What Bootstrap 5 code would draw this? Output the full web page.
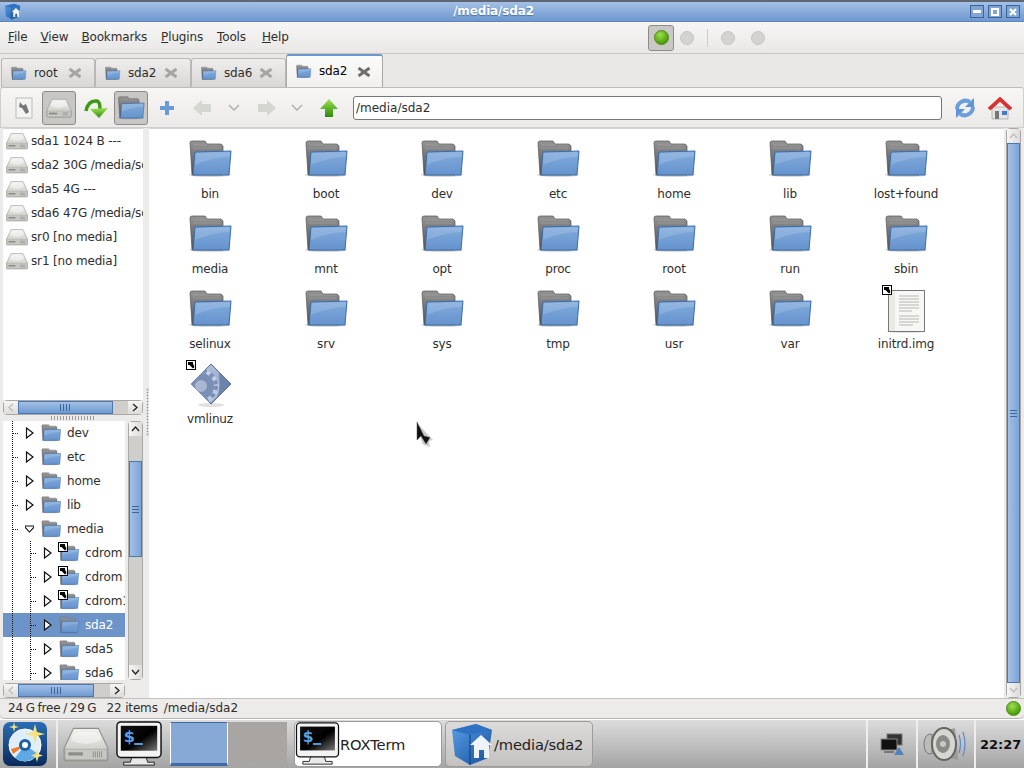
<!DOCTYPE html>
<html lang="en">
<head>
<meta charset="utf-8">
<title>/media/sda2</title>
<link href="https://cdn.jsdelivr.net/npm/bootstrap@5.3.0/dist/css/bootstrap.min.css" rel="stylesheet">
<style>
html,body{height:100%;}
body{width:1024px;height:768px;overflow:hidden;font-family:"DejaVu Sans",sans-serif;font-size:12px;letter-spacing:-.15px;color:#2e2e2e;background:#ecebe9;line-height:17px;}
.svgdefs{position:absolute;width:0;height:0;}
.win-title{height:22px;background:linear-gradient(#a3c0e5,#6e98cf);border-top:2px solid #5f6672;border-bottom:1px solid #5f86b8;padding:0 4px;color:#fff;font-weight:700;text-shadow:0 1px 1px #4d6f9e;}
.win-title .ttl{flex:1;text-align:center;font-size:12px;}
.wbtn{width:14px;height:13px;border:1px solid #3c6296;background:#7fa4d6;margin-left:4px;}
.menubar{height:32px;background:linear-gradient(#f7f6f5,#e9e8e6);border-bottom:1px solid #c8c7c5;padding:0 0 0 8px;}
.menu-i{margin-right:14px;color:#2e2e2e;}
.menu-tight{margin-right:13px;}
.menu-wide{margin-right:16px;}
.ledgroup{margin-right:259px;margin-left:auto;}
.led-btn{width:26px;height:26px;border:1px solid #8d8b88;border-radius:3px;background:#c9c8c5;margin-right:6px;}
.led{width:14px;height:14px;border-radius:50%;background:#d3d3d0;border:1px solid #c5c5c2;display:block;}
.led-on{width:15px;height:15px;background:radial-gradient(circle at 40% 30%,#9be04f,#4e9e0c 70%);border:1px solid #4b8a12;}
.led-sep{width:1px;height:18px;background:#cfcecb;margin:0 13px;}
.tabrow{height:33px;padding-left:1px;background:#e9e8e6;border:0;flex-wrap:nowrap;}
.tabrow .nav-link{height:29px;width:94px;margin:4px 0 0;padding:0 12px 0 8px;border:1px solid #b9b8b6;border-bottom:0;border-radius:3px 3px 0 0;background:linear-gradient(#efeeec,#d8d7d5);color:#2e2e2e;font-size:12px;display:flex;align-items:center;gap:7px;}
.tabrow .nav-item:nth-child(2) .nav-link{width:96px;}
.tabrow .nav-item:nth-child(3) .nav-link{width:95px;}
.tabrow .nav-link.active{height:33px;width:97px;margin-top:0;background:linear-gradient(#fbfbfa,#f1f0ef);border-color:#a9a8a6;border-top:2px solid #6d98cd;padding-right:11px;}
.tabicon{width:17px;height:17px;flex:none;}
.tabx{width:14px;height:10px;margin-left:auto;flex:none;color:#a5a5a2;}
.active .tabx{color:#6f6f6d;}
.tbar{height:41px;background:linear-gradient(#f7f6f5,#eceae8);border:1px solid #cfcecb;border-top:1px solid #bdbcba;border-radius:3px 3px 0 0;padding-left:13px;}
.tbar>svg{flex:none;}
.tb-press{width:34px;height:34px;border:1px solid #8d8b88;border-radius:3px;background:#c8c7c4;flex:none;}
.tbturn{margin:0 4px 0 8px;}
.tbplus{margin-left:11px;}
.tbback{margin-left:17px;}
.tbchev{margin-left:16px;}
.tbfwd{margin-left:17px;}
.tbchev2{margin-left:14px;}
.tbup{margin-left:16px;}
.path-inp{height:24px;width:589px;margin-left:14px;flex:none;border:1px solid #77767a;border-radius:3px;font-size:12px;padding:0 2px;color:#2e2e2e;box-shadow:none;background:#fff;letter-spacing:0;}
.tbref{margin-left:11px;}
.tbhome{margin-left:10px;}
.panes{height:570px;}
.side{width:146px;padding-left:3px;}
.devlist{height:272px;background:#fff;overflow:hidden;width:140px;border-top:1px solid #d5d4d2;}
.devrow{height:24px;white-space:nowrap;gap:2px;padding-left:2px;}
.hscroll{height:15px;border:1px solid #a9a8a6;border-radius:4px;background:#cfcecb;flex:none;}
.hs-top{width:140px;}
.hs-low{width:122px;margin-top:3px;}
.sb-end{width:14px;flex:none;background:linear-gradient(#f6f5f4,#dddcda);color:#333;}
.sb-thumb{background:linear-gradient(#a3c0e6,#6f9bd2);border:1px solid #4b78b3;}
.th-top{width:95px;}
.th-low{width:76px;}
.th-v{height:96px;}
.grip{width:11px;height:7px;display:block;background:repeating-linear-gradient(90deg,#3f669a 0 1px,transparent 1px 3px);}
.grip-v{width:7px;height:8px;display:block;background:repeating-linear-gradient(0deg,#3f669a 0 1px,transparent 1px 3px);}
.hgrab{height:6px;width:140px;flex:none;padding:1px 0 0 47px;}
.dots-h{display:block;width:46px;height:4px;background:radial-gradient(circle,#9a9997 .8px,transparent 1.100px) 0 0/3px 2px;}
.treewrap{height:259px;width:140px;gap:3px;flex:none;}
.tree{width:122px;background:#fff;overflow:hidden;height:259px;}
.trow{height:24px;white-space:nowrap;}
.trow.sel{background:#6d94c8;color:#fff;}
.con{width:18px;height:24px;flex:none;margin-left:9px;background:repeating-linear-gradient(#111 0 1px,transparent 1px 2px) 0 0/1px 100% no-repeat;}
.con+.con{margin-left:0;}
.con-last{background:repeating-linear-gradient(#111 0 1px,transparent 1px 2px) 0 0/1px 100% no-repeat,repeating-linear-gradient(90deg,#111 0 1px,transparent 1px 2px) 1px 12px/5px 1px no-repeat;}
.tri{width:9px;height:12px;flex:none;margin-left:-5px;margin-right:6px;}
.ticon{width:22px;height:22px;flex:none;margin-right:5px;}
.badge-box{position:relative;display:block;flex:none;}
.badge-box .ticon{margin-right:0;display:block;}
.lnk{position:absolute;left:0;top:0;width:10px;height:10px;}
.filegrid{flex:1;background:#fff;display:grid;grid-template-columns:repeat(7,116px);grid-auto-rows:75px;align-content:start;padding:1px 0 0 3px;border-top:1px solid #d5d4d2;}
.fitem{padding-top:5px;text-align:center;}
.bigicon{width:48px;height:48px;display:block;margin:0 auto;}
.fname{margin-top:2px;height:18px;line-height:18px;color:#2e2e2e;}
.vscroll{width:15px;flex:none;border:1px solid #a9a8a6;border-radius:4px;background:#cfcecb;}
.vend{height:14px;flex:none;background:linear-gradient(90deg,#f6f5f4,#dddcda);}
.vgap{height:25px;flex:none;}
.vthumb{background:linear-gradient(90deg,#a3c0e6,#7ca5d8);border:1px solid #4b78b3;}
.mainscroll{margin:0 3px 0 2px;}
.gutter{width:3px;padding-top:260px;}
.dots-v{display:block;width:3px;height:48px;background:radial-gradient(circle,#9a9997 .8px,transparent 1.100px) 0 0/3px 3px;}
.statusbar{height:21px;border-top:1px solid #c3c2c0;border-bottom:1px solid #b5b4b2;border-radius:0 0 5px 5px;padding:0 3px 0 8px;background:#ecebe9;gap:6px;}
.st-free{word-spacing:-1px;margin-right:4px;}
.st-path{letter-spacing:0;}
.taskbar{height:49px;background:linear-gradient(#dcdcdc,#a4a4a4);border-top:1px solid #fff;flex:none;}
.startcell{width:58px;height:100%;border-right:2px solid #eee;padding-left:2px;flex:none;}
.tk-drive{margin-left:3px;flex:none;}
.tk-term{margin-left:4px;flex:none;}
.pager{width:117px;height:44px;margin-left:7px;flex:none;}
.desk1{width:58px;background:#86a9d6;border:1px solid #fff;border-top:1px solid #3f6aa5;border-bottom:3px solid #3f6aa5;}
.desk2{flex:1;background:#a8a5a2;}
.taskbtn{height:46px;width:148px;flex:none;border:1px solid #9d9c9a;border-radius:5px;font-size:14.7px;color:#222;white-space:nowrap;}
.taskbtn.on{background:#fff;margin-left:7px;}
.taskbtn.off{background:linear-gradient(#dddbd9,#c4c2c0);margin-left:3px;}
.tray{height:100%;border-left:2px solid #eee;flex:none;}
.tray-net{width:50px;padding-left:12px;}
.tray-snd{width:58px;padding-left:5px;}
.tray-clk{width:50px;padding-left:4px;}
.clock{font-weight:700;font-size:13px;color:#111;letter-spacing:0;}
.ptr{position:absolute;left:416px;top:421px;width:18px;height:26px;}
</style>
</head>
<body class="d-flex flex-column">
<svg class="svgdefs" xmlns="http://www.w3.org/2000/svg">
<defs>
<linearGradient id="gBack" x1="0" y1="0" x2="0" y2="1"><stop offset="0" stop-color="#949494"/><stop offset="1" stop-color="#4f4f4f"/></linearGradient>
<linearGradient id="gBlue" x1="0" y1="0" x2="0" y2="1"><stop offset="0" stop-color="#83acdd"/><stop offset="1" stop-color="#6593cd"/></linearGradient>
<linearGradient id="gDrive" x1="0" y1="0" x2="0" y2="1"><stop offset="0" stop-color="#f2f2f0"/><stop offset="1" stop-color="#bdbdb9"/></linearGradient>
<linearGradient id="gScreen" x1="0" y1="0" x2="1" y2="1"><stop offset="0" stop-color="#111"/><stop offset=".55" stop-color="#000"/><stop offset="1" stop-color="#777"/></linearGradient>
<linearGradient id="gCube" x1="0" y1="0" x2="1" y2="1"><stop offset="0" stop-color="#5aa0e6"/><stop offset="1" stop-color="#134f9c"/></linearGradient>
<linearGradient id="gGreen" x1="0" y1="0" x2="0" y2="1"><stop offset="0" stop-color="#9be04f"/><stop offset="1" stop-color="#2f8a10"/></linearGradient>
<linearGradient id="gDia" x1="0" y1="0" x2="1" y2="1"><stop offset="0" stop-color="#c0cce2"/><stop offset="1" stop-color="#7d95bd"/></linearGradient>
<linearGradient id="gStart" x1="0" y1="0" x2="0" y2="1"><stop offset="0" stop-color="#2a6db4"/><stop offset="1" stop-color="#0a2a5a"/></linearGradient>
<clipPath id="clipDia"><path d="M25 4L45 24L25 44L5 24Z"/></clipPath>
<symbol id="folder" viewBox="0 0 48 48">
<ellipse cx="24" cy="40" rx="21" ry="2" fill="#000" opacity=".15"/>
<path d="M4 8Q4 6 6 6H19L21 9H35L37 11V40H6Z" fill="url(#gBack)" stroke="#555" stroke-width=".7"/>
<path d="M7 10H34M7 13H34" stroke="#ccc" stroke-width=".5" opacity=".5"/>
<path d="M9 17L45 16L43 40H7Z" fill="url(#gBlue)" stroke="#3a6cab" stroke-width="1"/>
<path d="M9.500 18L44 17L43.500 22Q28 22 9 30Z" fill="#fff" opacity=".14"/>
</symbol>
<symbol id="drive" viewBox="0 0 48 48">
<path d="M12 9H36L45 28V38Q45 40 43 40H5Q3 40 3 38V28Z" fill="url(#gDrive)" stroke="#8d8d89"/>
<path d="M4 29H44V38Q44 39 43 39H5Q4 39 4 38Z" fill="#c7c7c3" stroke="#9d9d99" stroke-width=".6"/>
<rect x="7" y="32" width="14" height="3" fill="#8b8b87"/><path d="M31 31v6M33 31v6M35 31v6M37 31v6M39 31v6" stroke="#888" stroke-width=".8"/>
<ellipse cx="24" cy="18" rx="14" ry="6" fill="#fff" opacity=".4"/>
</symbol>
<symbol id="term" viewBox="0 0 48 48">
<path d="M17 36H31L33 43H40V46H8V43H15Z" fill="#e9e9e9" stroke="#222"/>
<rect x="1" y="1" width="46" height="37" rx="4" fill="#f3f3f3" stroke="#111" stroke-width="1.500"/>
<rect x="5" y="5" width="38" height="26" fill="url(#gScreen)"/>
<text x="8" y="22" font-family="DejaVu Sans" font-size="17" font-weight="700" fill="#59a0ea">$</text>
<rect x="19" y="23" width="9" height="2" fill="#59a0ea"/>
</symbol>
<symbol id="cube" viewBox="0 0 44 44">
<path d="M2 8L26 2L42 8L38 36L20 43L5 34Z" fill="url(#gCube)"/>
<path d="M2 8L26 2L42 8L20 13Z" fill="#2f72c4"/>
<path d="M20 13L20 43" stroke="#0b3c7c" stroke-width="1"/>
<path d="M31 13L42 23H39V36H34V28H29V36H24V23H20Z" fill="#fff" opacity=".92"/>
</symbol>
<symbol id="start" viewBox="0 0 46 46">
<rect x="1" y="1" width="44" height="44" rx="7" fill="url(#gStart)"/>
<circle cx="23" cy="24" r="16" fill="#dfeefb" stroke="#fff" stroke-width="1"/>
<path d="M23 24L13 37A16 16 0 0 0 36 33Z" fill="#5ea9e5"/>
<path d="M23 24L9 28L11 33Z" fill="#ef7d2d"/>
<circle cx="23" cy="24" r="6" fill="#1f5fa8"/><circle cx="23" cy="24" r="3" fill="#fff"/>
<path d="M33 3L35 11L43 13L35 15L33 23L31 15L23 13L31 11Z" fill="#f5e27a"/>
<path d="M12 1L13 5L17 6L13 7L12 11L11 7L7 6L11 5Z" fill="#f5e27a"/>
<path d="M35 28L36.500 33L41 34.500L36.500 36L35 41L33.500 36L29 34.500L33.500 33Z" fill="#f5e27a"/>
</symbol>
<symbol id="xmark" viewBox="0 0 14 10"><path d="M1.500 1L12.500 9M12.500 1L1.500 9" stroke="currentColor" stroke-width="3"/></symbol>
<symbol id="triR" viewBox="0 0 9 12"><path d="M1.500 1L8 6L1.500 11Z" fill="#fff" stroke="#111" stroke-width="1.200"/></symbol>
<symbol id="lnkbadge" viewBox="0 0 10 10"><rect x=".5" y=".5" width="9" height="9" fill="#fff" stroke="#000"/><path d="M2 2H7V3.500L8.500 7L7 8.500L3.500 5H2Z" fill="#000"/></symbol>
</defs>
</svg>

<header class="win-title d-flex align-items-center">
<svg width="17" height="17" class="flex-shrink-0"><use href="#cube"/></svg>
<div class="ttl">/media/sda2</div>
<span class="wbtn d-flex align-items-end justify-content-center"><svg width="8" height="3" class="mb-1"><rect width="8" height="3" fill="#fff"/></svg></span>
<span class="wbtn d-flex align-items-center justify-content-center"><svg width="8" height="8"><rect x="1" y="1" width="6" height="6" fill="none" stroke="#fff" stroke-width="2"/></svg></span>
<span class="wbtn d-flex align-items-center justify-content-center"><svg width="8" height="8"><path d="M1 1L7 7M7 1L1 7" stroke="#fff" stroke-width="2.200"/></svg></span>
</header>

<nav class="menubar d-flex align-items-center">
<span class="menu-i menu-tight"><u>F</u>ile</span><span class="menu-i menu-tight"><u>V</u>iew</span><span class="menu-i"><u>B</u>ookmarks</span><span class="menu-i"><u>P</u>lugins</span><span class="menu-i menu-wide"><u>T</u>ools</span><span class="menu-i"><u>H</u>elp</span>
<span class="ledgroup d-flex align-items-center">
<span class="led-btn d-flex align-items-center justify-content-center"><span class="led led-on"></span></span>
<span class="led"></span><span class="led-sep"></span><span class="led"></span><span class="led ms-3"></span>
</span>
</nav>

<ul class="nav nav-tabs tabrow">
<li class="nav-item"><a class="nav-link" href="#"><svg class="tabicon"><use href="#folder"/></svg>root<svg class="tabx"><use href="#xmark"/></svg></a></li>
<li class="nav-item"><a class="nav-link" href="#"><svg class="tabicon"><use href="#folder"/></svg>sda2<svg class="tabx"><use href="#xmark"/></svg></a></li>
<li class="nav-item"><a class="nav-link" href="#"><svg class="tabicon"><use href="#folder"/></svg>sda6<svg class="tabx"><use href="#xmark"/></svg></a></li>
<li class="nav-item"><a class="nav-link active" href="#"><svg class="tabicon"><use href="#folder"/></svg>sda2<svg class="tabx"><use href="#xmark"/></svg></a></li>
</ul>

<div class="tbar d-flex align-items-center">
<svg width="20" height="24"><rect x="2" y="2" width="16" height="20" fill="#f4f4f2" stroke="#bbb"/><path d="M6 6L9 9.500L12 8L15 16L12 18L8 12L5 11Z" fill="#777"/></svg>
<span class="tb-press d-flex align-items-center justify-content-center ms-2"><svg width="28" height="28"><use href="#drive"/></svg></span>
<svg width="26" height="26" class="tbturn" viewBox="0 0 26 26"><path d="M2 16Q4 5 13 6Q16 7 16 14" fill="none" stroke="#3d9a12" stroke-width="3.500"/><path d="M6 14L24 13L15 23Z" fill="url(#gGreen)"/></svg>
<span class="tb-press d-flex align-items-center justify-content-center"><svg width="30" height="30"><use href="#folder"/></svg></span>
<svg width="16" height="16" class="tbplus" viewBox="0 0 16 16"><path d="M6 1H10V6H15V10H10V15H6V10H1V6H6Z" fill="#6a9bd6"/></svg>
<svg width="20" height="18" viewBox="0 0 20 18" class="tbback"><path d="M1 9L10 1V5H19V13H10V17Z" fill="#d5d5d2"/></svg>
<svg width="12" height="8" viewBox="0 0 12 8" class="tbchev"><path d="M1 1L6 6L11 1" fill="none" stroke="#aaa" stroke-width="1.300"/></svg>
<svg width="20" height="18" viewBox="0 0 20 18" class="tbfwd"><path d="M19 9L10 1V5H1V13H10V17Z" fill="#d5d5d2"/></svg>
<svg width="12" height="8" viewBox="0 0 12 8" class="tbchev2"><path d="M1 1L6 6L11 1" fill="none" stroke="#aaa" stroke-width="1.300"/></svg>
<svg width="20" height="20" viewBox="0 0 20 20" class="tbup"><path d="M10 1L19 11H14V19H6V11H1Z" fill="url(#gGreen)"/></svg>
<input class="form-control path-inp" value="/media/sda2" aria-label="path">
<svg width="24" height="24" viewBox="0 0 24 24" class="tbref"><path d="M4 13A8.500 8.500 0 0 1 17 6" fill="none" stroke="#6a9fdc" stroke-width="4"/><path d="M21 2V11H12Z" fill="#5f95d6"/><path d="M20 11A8.500 8.500 0 0 1 7 18" fill="none" stroke="#6a9fdc" stroke-width="4"/><path d="M3 22V13H12Z" fill="#5f95d6"/></svg>
<svg width="26" height="26" viewBox="0 0 26 26" class="tbhome"><path d="M5 12H21V24H5Z" fill="#e4e4e2" stroke="#999" stroke-width=".6"/><path d="M1 13L13 2L25 13L22.500 15L13 6.500L3.500 15Z" fill="#e02d2d" stroke="#b01515" stroke-width=".5"/><rect x="8" y="16" width="4" height="8" fill="#777"/><rect x="15" y="16" width="5" height="4" fill="#3f7dc4"/></svg>
</div>

<main class="panes d-flex">
<aside class="side d-flex flex-column">
<div class="devlist">
<div class="devrow d-flex align-items-center"><svg width="24" height="24" class="flex-shrink-0"><use href="#drive"/></svg>sda1 1024 B ---</div>
<div class="devrow d-flex align-items-center"><svg width="24" height="24" class="flex-shrink-0"><use href="#drive"/></svg>sda2 30G /media/sda2</div>
<div class="devrow d-flex align-items-center"><svg width="24" height="24" class="flex-shrink-0"><use href="#drive"/></svg>sda5 4G ---</div>
<div class="devrow d-flex align-items-center"><svg width="24" height="24" class="flex-shrink-0"><use href="#drive"/></svg>sda6 47G /media/sda6</div>
<div class="devrow d-flex align-items-center"><svg width="24" height="24" class="flex-shrink-0"><use href="#drive"/></svg>sr0 [no media]</div>
<div class="devrow d-flex align-items-center"><svg width="24" height="24" class="flex-shrink-0"><use href="#drive"/></svg>sr1 [no media]</div>
</div>
<div class="hscroll hs-top d-flex">
<span class="sb-end d-flex align-items-center justify-content-center"><svg width="6" height="9"><path d="M5 1L1 4.500L5 8" fill="none" stroke="#bbb" stroke-width="1.300"/></svg></span>
<span class="sb-thumb th-top d-flex align-items-center justify-content-center"><span class="grip"></span></span>
<span class="flex-grow-1"></span>
<span class="sb-end d-flex align-items-center justify-content-center"><svg width="6" height="9"><path d="M1 1L5 4.500L1 8" fill="none" stroke="#222" stroke-width="1.300"/></svg></span>
</div>
<div class="hgrab"><span class="dots-h"></span></div>
<div class="treewrap d-flex">
<div class="tree">
<div class="trow d-flex align-items-center"><span class="con con-last"></span><svg class="tri"><use href="#triR"/></svg><svg class="ticon"><use href="#folder"/></svg>dev</div>
<div class="trow d-flex align-items-center"><span class="con con-last"></span><svg class="tri"><use href="#triR"/></svg><svg class="ticon"><use href="#folder"/></svg>etc</div>
<div class="trow d-flex align-items-center"><span class="con con-last"></span><svg class="tri"><use href="#triR"/></svg><svg class="ticon"><use href="#folder"/></svg>home</div>
<div class="trow d-flex align-items-center"><span class="con con-last"></span><svg class="tri"><use href="#triR"/></svg><svg class="ticon"><use href="#folder"/></svg>lib</div>
<div class="trow d-flex align-items-center"><span class="con con-last"></span><svg class="tri" viewBox="0 0 9 12"><path d="M-1 3H10L4.500 9Z" fill="#fff" stroke="#111" stroke-width="1.100"/></svg><svg class="ticon"><use href="#folder"/></svg>media</div>
<div class="trow d-flex align-items-center"><span class="con"></span><span class="con con-last"></span><svg class="tri"><use href="#triR"/></svg><span class="badge-box ticon"><svg class="ticon"><use href="#folder"/></svg><svg class="lnk"><use href="#lnkbadge"/></svg></span>cdrom</div>
<div class="trow d-flex align-items-center"><span class="con"></span><span class="con con-last"></span><svg class="tri"><use href="#triR"/></svg><span class="badge-box ticon"><svg class="ticon"><use href="#folder"/></svg><svg class="lnk"><use href="#lnkbadge"/></svg></span>cdrom</div>
<div class="trow d-flex align-items-center"><span class="con"></span><span class="con con-last"></span><svg class="tri"><use href="#triR"/></svg><span class="badge-box ticon"><svg class="ticon"><use href="#folder"/></svg><svg class="lnk"><use href="#lnkbadge"/></svg></span>cdrom1</div>
<div class="trow sel d-flex align-items-center"><span class="con"></span><span class="con con-last"></span><svg class="tri"><use href="#triR"/></svg><svg class="ticon opacity-75"><use href="#folder"/></svg>sda2</div>
<div class="trow d-flex align-items-center"><span class="con"></span><span class="con con-last"></span><svg class="tri"><use href="#triR"/></svg><svg class="ticon"><use href="#folder"/></svg>sda5</div>
<div class="trow d-flex align-items-center"><span class="con"></span><span class="con con-last"></span><svg class="tri"><use href="#triR"/></svg><svg class="ticon"><use href="#folder"/></svg>sda6</div>
</div>
<div class="vscroll d-flex flex-column">
<span class="vend d-flex align-items-center justify-content-center"><svg width="9" height="6"><path d="M1 5L4.500 1L8 5" fill="none" stroke="#222" stroke-width="1.300"/></svg></span>
<span class="vgap"></span>
<span class="vthumb th-v d-flex align-items-center justify-content-center"><span class="grip-v"></span></span>
<span class="flex-grow-1"></span>
<span class="vend d-flex align-items-center justify-content-center"><svg width="9" height="6"><path d="M1 1L4.500 5L8 1" fill="none" stroke="#222" stroke-width="1.300"/></svg></span>
</div>
</div>
<div class="hscroll hs-low d-flex">
<span class="sb-end d-flex align-items-center justify-content-center"><svg width="6" height="9"><path d="M5 1L1 4.500L5 8" fill="none" stroke="#bbb" stroke-width="1.300"/></svg></span>
<span class="sb-thumb th-low d-flex align-items-center justify-content-center"><span class="grip"></span></span>
<span class="flex-grow-1"></span>
<span class="sb-end d-flex align-items-center justify-content-center"><svg width="6" height="9"><path d="M1 1L5 4.500L1 8" fill="none" stroke="#222" stroke-width="1.300"/></svg></span>
</div>
</aside>
<div class="gutter flex-shrink-0"><span class="dots-v"></span></div>
<section class="filegrid">
<div class="fitem"><svg class="bigicon"><use href="#folder"/></svg><div class="fname">bin</div></div>
<div class="fitem"><svg class="bigicon"><use href="#folder"/></svg><div class="fname">boot</div></div>
<div class="fitem"><svg class="bigicon"><use href="#folder"/></svg><div class="fname">dev</div></div>
<div class="fitem"><svg class="bigicon"><use href="#folder"/></svg><div class="fname">etc</div></div>
<div class="fitem"><svg class="bigicon"><use href="#folder"/></svg><div class="fname">home</div></div>
<div class="fitem"><svg class="bigicon"><use href="#folder"/></svg><div class="fname">lib</div></div>
<div class="fitem"><svg class="bigicon"><use href="#folder"/></svg><div class="fname">lost+found</div></div>
<div class="fitem"><svg class="bigicon"><use href="#folder"/></svg><div class="fname">media</div></div>
<div class="fitem"><svg class="bigicon"><use href="#folder"/></svg><div class="fname">mnt</div></div>
<div class="fitem"><svg class="bigicon"><use href="#folder"/></svg><div class="fname">opt</div></div>
<div class="fitem"><svg class="bigicon"><use href="#folder"/></svg><div class="fname">proc</div></div>
<div class="fitem"><svg class="bigicon"><use href="#folder"/></svg><div class="fname">root</div></div>
<div class="fitem"><svg class="bigicon"><use href="#folder"/></svg><div class="fname">run</div></div>
<div class="fitem"><svg class="bigicon"><use href="#folder"/></svg><div class="fname">sbin</div></div>
<div class="fitem"><svg class="bigicon"><use href="#folder"/></svg><div class="fname">selinux</div></div>
<div class="fitem"><svg class="bigicon"><use href="#folder"/></svg><div class="fname">srv</div></div>
<div class="fitem"><svg class="bigicon"><use href="#folder"/></svg><div class="fname">sys</div></div>
<div class="fitem"><svg class="bigicon"><use href="#folder"/></svg><div class="fname">tmp</div></div>
<div class="fitem"><svg class="bigicon"><use href="#folder"/></svg><div class="fname">usr</div></div>
<div class="fitem"><svg class="bigicon"><use href="#folder"/></svg><div class="fname">var</div></div>
<div class="fitem"><span class="badge-box bigicon"><svg class="bigicon" viewBox="0 0 48 48"><ellipse cx="24" cy="46" rx="19" ry="2" fill="#000" opacity=".12"/><rect x="6.500" y="5.500" width="36" height="41" fill="#f7f7f5" stroke="#777"/><rect x="7" y="6" width="6" height="40" fill="#e9e9e6"/><path d="M17 11H37M17 14H37M17 17H37M17 20H37M17 23H37M17 26H30M17 31H37M17 34H37M17 37H37M17 40H31" stroke="#b5b5b2" stroke-width="1.200"/></svg><svg class="lnk"><use href="#lnkbadge"/></svg></span><div class="fname">initrd.img</div></div>
<div class="fitem"><span class="badge-box bigicon"><svg class="bigicon" viewBox="0 0 48 48"><ellipse cx="25" cy="45" rx="13" ry="2" fill="#000" opacity=".12"/><path d="M25 4L45 24L25 44L5 24Z" fill="url(#gDia)" stroke="#4f6b99"/><g clip-path="url(#clipDia)"><circle cx="16" cy="27" r="17" fill="#dbe3f0" opacity=".55"/><circle cx="15" cy="26" r="13" fill="#7a8fb5"/><circle cx="15" cy="26" r="15" fill="none" stroke="#7a8fb5" stroke-width="4" stroke-dasharray="4 4"/><circle cx="15" cy="26" r="6" fill="#a9b7d0"/><path d="M31 5L45 24L30 42Q37 24 31 5Z" fill="#6c84ad"/></g></svg><svg class="lnk"><use href="#lnkbadge"/></svg></span><div class="fname">vmlinuz</div></div>
</section>
<div class="vscroll mainscroll d-flex flex-column">
<span class="vend d-flex align-items-center justify-content-center"><svg width="9" height="6"><path d="M1 5L4.500 1L8 5" fill="none" stroke="#bbb" stroke-width="1.300"/></svg></span>
<span class="vthumb flex-grow-1 d-flex align-items-center justify-content-center"><span class="grip-v"></span></span>
<span class="vend d-flex align-items-center justify-content-center"><svg width="9" height="6"><path d="M1 1L4.500 5L8 1" fill="none" stroke="#bbb" stroke-width="1.300"/></svg></span>
</div>
</main>

<footer class="statusbar d-flex align-items-center">
<span class="st-free">24 G free / 29 G</span><span>22 items</span><span class="st-path">/media/sda2</span>
<span class="led led-on ms-auto"></span>
</footer>

<div class="taskbar d-flex align-items-center">
<div class="startcell d-flex align-items-center"><svg width="46" height="46"><use href="#start"/></svg></div>
<svg width="50" height="50" class="tk-drive"><use href="#drive"/></svg>
<svg width="48" height="46" class="tk-term" viewBox="0 0 48 48"><use href="#term"/></svg>
<div class="pager d-flex"><span class="desk1"></span><span class="desk2"></span></div>
<div class="taskbtn on d-flex align-items-center"><svg width="45" height="44" class="flex-shrink-0" viewBox="0 0 48 48"><use href="#term"/></svg>ROXTerm</div>
<div class="taskbtn off d-flex align-items-center"><svg width="44" height="44" class="flex-shrink-0 ms-1"><use href="#cube"/></svg>/media/sda2</div>
<div class="flex-grow-1"></div>
<div class="tray tray-net d-flex align-items-center"><svg width="24" height="22" viewBox="0 0 24 22"><rect x="7" y="1" width="15" height="11" fill="#333" stroke="#777"/><rect x="1" y="6" width="16" height="11" fill="#111" stroke="#888"/><rect x="4" y="18" width="10" height="2" fill="#777"/><path d="M19 14L24 22H14Z" fill="#4f82bf"/></svg></div>
<div class="tray tray-snd d-flex align-items-center"><svg width="44" height="36" viewBox="0 0 44 36"><ellipse cx="7" cy="18" rx="6" ry="10" fill="#bcbcb8" stroke="#777"/><path d="M8 9L32 2L35 34L8 27Z" fill="#9a9a96"/><ellipse cx="21" cy="18" rx="12" ry="16" fill="#d6d6d2" stroke="#666" stroke-width="2"/><ellipse cx="20" cy="18" rx="7" ry="9" fill="#8a8a86"/><circle cx="20" cy="18" r="3" fill="#c9c9c5"/><path d="M36 9Q39 18 36 27M40 6Q44 18 40 30" fill="none" stroke="#5c8bc8" stroke-width="1.200"/></svg></div>
<div class="tray tray-clk d-flex align-items-center"><span class="clock">22:27</span></div>
</div>

<svg class="ptr" viewBox="0 0 18 26"><path d="M3 4L17 19L13 20L14 26L8 24L6 22Z" fill="#000" opacity=".2"/><path d="M1 1V19L5 15L10 23L14 16.500L8 15Z" fill="#111" stroke="#555" stroke-width=".5"/></svg>
</body>
</html>
